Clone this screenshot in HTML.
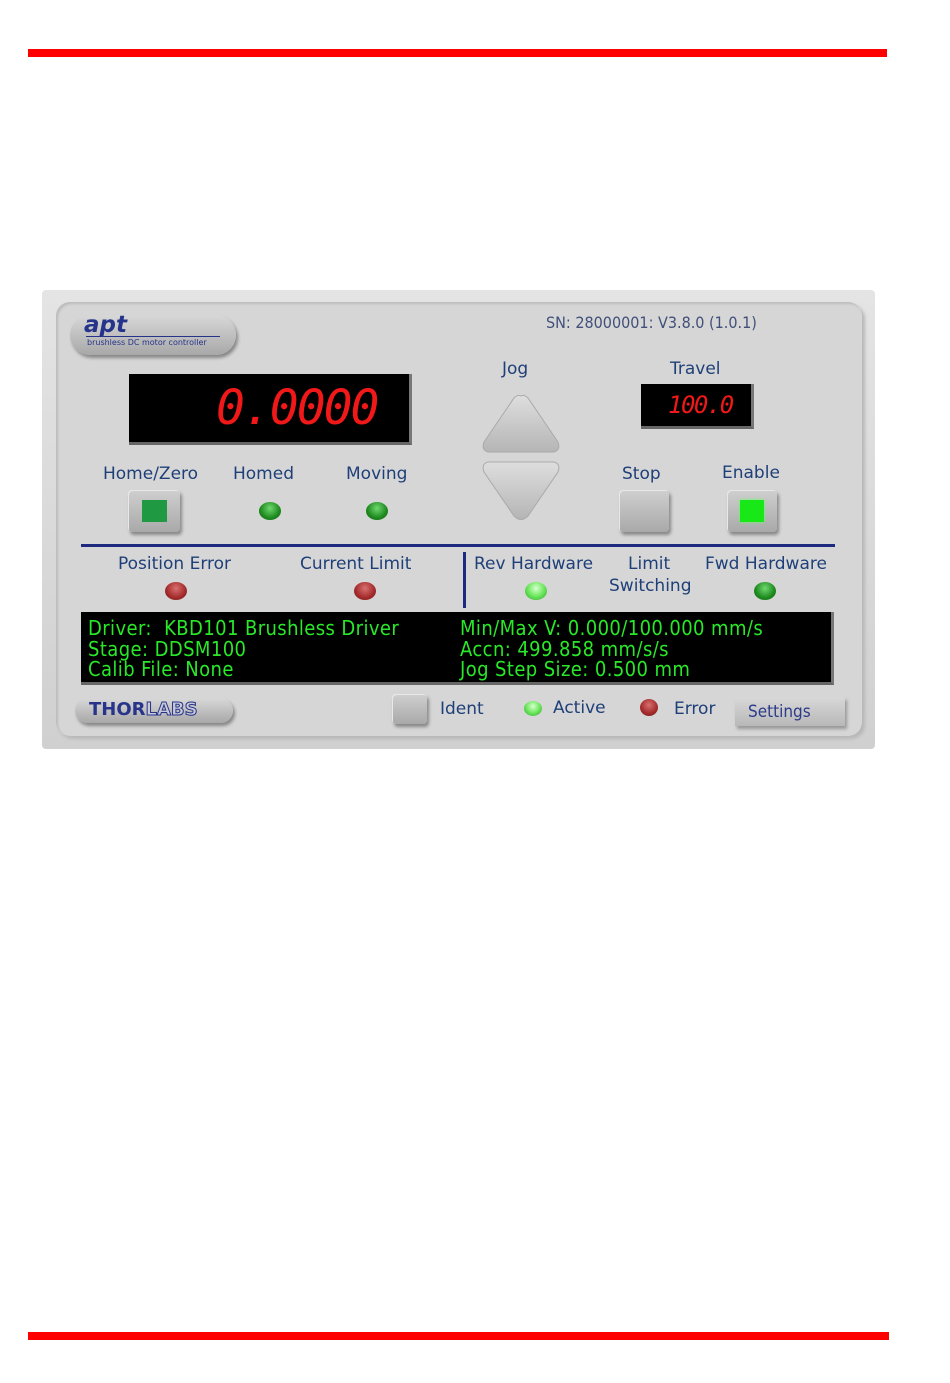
<!DOCTYPE html>
<html><head><meta charset="utf-8"><style>
body{margin:0;background:#fff;width:950px;height:1383px;position:relative;overflow:hidden;font-family:"DejaVu Sans","Liberation Sans",sans-serif}
.a{position:absolute}
.lbl{position:absolute;color:#1e3f78;font-size:17px;white-space:nowrap}
.led{position:absolute;width:22px;height:18px;border-radius:50%}
.g{background:radial-gradient(circle at 50% 35%,#6fd86f,#1e8a1e 60%,#145f14)}
.lg{background:radial-gradient(circle at 50% 35%,#d8ffd0,#6ee85e 50%,#2aa52a)}
.r{background:radial-gradient(circle at 50% 35%,#d87070,#a32a2a 60%,#6e1a1a)}
.btn{position:absolute;background:linear-gradient(#cfcfcf,#a9a9a9);border-radius:4px;box-shadow:2px 3px 3px #888,inset 1px 1px 0 #e8e8e8}
.seg{font-family:"DejaVu Sans Mono","Liberation Mono",monospace;color:#f01818;font-style:italic;position:absolute;white-space:nowrap}
.info{position:absolute;color:#29e829;font-size:20px;letter-spacing:0.4px;line-height:20.5px;font-family:"DejaVu Sans Condensed","Liberation Sans Narrow","Liberation Sans",sans-serif;white-space:nowrap}
</style></head><body>
<div class="a" style="left:28px;top:49px;width:859px;height:8px;background:#f00"></div>
<div class="a" style="left:28px;top:1332px;width:861px;height:8px;background:#f00"></div>

<div class="a" style="left:42px;top:290px;width:833px;height:459px;background:linear-gradient(#e4e4e4,#d0d0d0);border-radius:4px"></div>
<div class="a" style="left:56px;top:302px;width:806px;height:434px;background:#d6d6d6;border-radius:14px;box-shadow:inset 2px 2px 2px #bcbcbc,3px 3px 3px #b8b8b8"></div>

<div class="a" style="left:70px;top:315px;width:166px;height:40px;border-radius:20px;background:linear-gradient(#d8d8d8,#a8a8a8);box-shadow:2px 3px 3px #888"></div>
<div class="a" style="left:84px;top:312px;color:#25338a;font-weight:bold;font-style:italic;font-size:23px">apt</div>
<div class="a" style="left:86px;top:336px;width:134px;height:1px;background:#25338a"></div>
<div class="a" style="left:87px;top:338px;color:#25338a;font-size:8px">brushless DC motor controller</div>
<div class="a" style="left:546px;top:313px;color:#41507a;font-size:16px;font-family:'DejaVu Sans Condensed',sans-serif">SN: 28000001: V3.8.0 (1.0.1)</div>

<div class="a" style="left:129px;top:374px;width:280px;height:68px;background:#000;border-right:3px solid #777;border-bottom:3px solid #666"></div>
<div class="seg" style="left:216px;top:380px;font-size:48px;letter-spacing:-2px">0.0000</div>
<div class="lbl" style="left:103px;top:464px">Home/Zero</div>
<div class="lbl" style="left:233px;top:464px">Homed</div>
<div class="lbl" style="left:346px;top:464px">Moving</div>
<div class="btn" style="left:128px;top:490px;width:52px;height:42px"></div>
<div class="a" style="left:142px;top:500px;width:25px;height:22px;background:#1f9a42"></div>
<div class="led g" style="left:259px;top:502px"></div>
<div class="led g" style="left:366px;top:502px"></div>

<div class="lbl" style="left:502px;top:359px">Jog</div>
<svg class="a" style="left:478px;top:392px" width="86" height="132"><defs><linearGradient id="t" x1="0" y1="0" x2="0" y2="1"><stop offset="0" stop-color="#dedede"/><stop offset="1" stop-color="#b5b5b5"/></linearGradient></defs>
<path d="M43 4 Q46 2 50 6 L80 50 Q83 58 76 60 L10 60 Q3 58 6 50 L36 6 Q40 2 43 4Z" fill="url(#t)" stroke="#aaa"/>
<path d="M10 70 L76 70 Q83 72 80 80 L50 124 Q43 131 36 124 L6 80 Q3 72 10 70Z" fill="url(#t)" stroke="#aaa"/></svg>

<div class="lbl" style="left:670px;top:359px">Travel</div>
<div class="a" style="left:641px;top:384px;width:110px;height:42px;background:#000;border-right:3px solid #777;border-bottom:3px solid #666"></div>
<div class="seg" style="left:668px;top:391px;font-size:24px;letter-spacing:-1.5px">100.0</div>
<div class="lbl" style="left:622px;top:464px">Stop</div>
<div class="lbl" style="left:722px;top:463px">Enable</div>
<div class="btn" style="left:619px;top:490px;width:50px;height:42px"></div>
<div class="btn" style="left:727px;top:490px;width:50px;height:42px"></div>
<div class="a" style="left:740px;top:500px;width:24px;height:22px;background:#18e818;box-shadow:0 0 3px #6f6"></div>

<div class="a" style="left:81px;top:544px;width:754px;height:3px;background:#1e2a80"></div>
<div class="a" style="left:463px;top:552px;width:3px;height:56px;background:#1e2a80"></div>
<div class="lbl" style="left:118px;top:554px">Position Error</div>
<div class="lbl" style="left:300px;top:554px">Current Limit</div>
<div class="lbl" style="left:474px;top:554px">Rev Hardware</div>
<div class="lbl" style="left:628px;top:554px">Limit</div>
<div class="lbl" style="left:609px;top:576px">Switching</div>
<div class="lbl" style="left:705px;top:554px">Fwd Hardware</div>
<div class="led r" style="left:165px;top:582px"></div>
<div class="led r" style="left:354px;top:582px"></div>
<div class="led lg" style="left:525px;top:582px"></div>
<div class="led g" style="left:754px;top:582px"></div>

<div class="a" style="left:81px;top:612px;width:750px;height:70px;background:#000;border-right:3px solid #777;border-bottom:3px solid #666"></div>
<div class="info" style="left:88px;top:618px">Driver: &nbsp;KBD101 Brushless Driver<br>Stage: DDSM100<br>Calib File: None</div>
<div class="info" style="left:460px;top:618px">Min/Max V: 0.000/100.000 mm/s<br>Accn: 499.858 mm/s/s<br>Jog Step Size: 0.500 mm</div>

<div class="a" style="left:75px;top:698px;width:158px;height:25px;border-radius:13px;background:linear-gradient(#d8d8d8,#a8a8a8);box-shadow:2px 3px 3px #888"></div>
<div class="a" style="left:89px;top:699px;color:#27348a;font-weight:bold;font-size:18px;letter-spacing:0">THOR<span style="color:#c8c8d8;-webkit-text-stroke:1px #27348a">LABS</span></div>
<div class="btn" style="left:392px;top:694px;width:35px;height:30px"></div>
<div class="lbl" style="left:440px;top:699px">Ident</div>
<div class="led lg" style="left:524px;top:701px;width:18px;height:15px"></div>
<div class="lbl" style="left:553px;top:698px">Active</div>
<div class="led r" style="left:640px;top:699px;width:18px;height:17px"></div>
<div class="lbl" style="left:674px;top:699px">Error</div>
<div class="a" style="left:735px;top:697px;width:110px;height:29px;background:linear-gradient(#d8d8d8,#b8b8b8);box-shadow:2px 3px 3px #999"></div>
<div class="a" style="left:748px;top:702px;color:#2b3a8a;font-size:17px;font-family:'DejaVu Sans Condensed',sans-serif">Settings</div>
</body></html>
